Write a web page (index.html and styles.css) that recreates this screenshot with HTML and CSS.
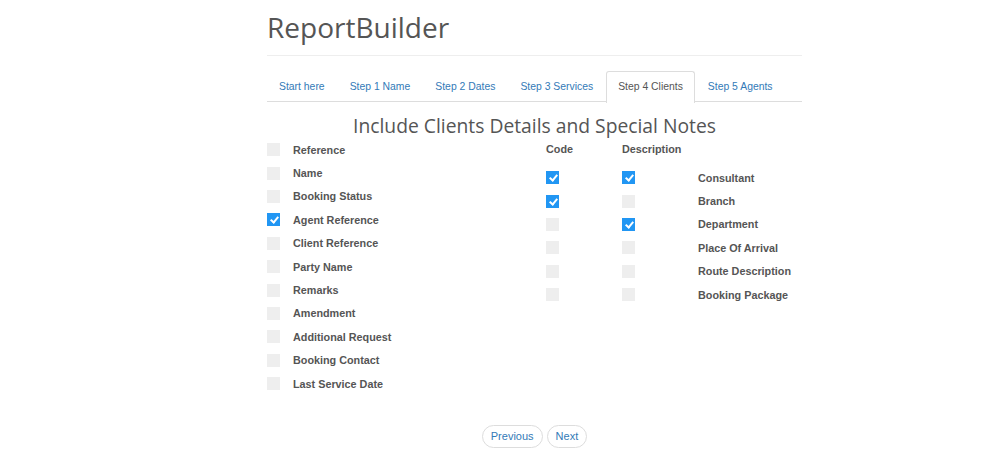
FILE: index.html
```html
<!DOCTYPE html>
<html>
<head>
<meta charset="utf-8">
<link rel="stylesheet" href="styles.css">
</head>
<body>
<div class="container">
  <div class="page-header"><h1>ReportBuilder</h1></div>
  <ul class="tabs">
    <li class="tab">Start here</li>
    <li class="tab">Step 1 Name</li>
    <li class="tab">Step 2 Dates</li>
    <li class="tab">Step 3 Services</li>
    <li class="tab active">Step 4 Clients</li>
    <li class="tab">Step 5 Agents</li>
  </ul>
  <h2 class="section-title">Include Clients Details and Special Notes</h2>
  <div class="fields">
    <div class="left-list">
      <div class="row"><span class="cb"></span><span class="lbl">Reference</span></div>
      <div class="row"><span class="cb"></span><span class="lbl">Name</span></div>
      <div class="row"><span class="cb"></span><span class="lbl">Booking Status</span></div>
      <div class="row"><span class="cb checked"></span><span class="lbl">Agent Reference</span></div>
      <div class="row"><span class="cb"></span><span class="lbl">Client Reference</span></div>
      <div class="row"><span class="cb"></span><span class="lbl">Party Name</span></div>
      <div class="row"><span class="cb"></span><span class="lbl">Remarks</span></div>
      <div class="row"><span class="cb"></span><span class="lbl">Amendment</span></div>
      <div class="row"><span class="cb"></span><span class="lbl">Additional Request</span></div>
      <div class="row"><span class="cb"></span><span class="lbl">Booking Contact</span></div>
      <div class="row"><span class="cb"></span><span class="lbl">Last Service Date</span></div>
    </div>
    <div class="right-table">
      <div class="trow head"><span class="lbl">Code</span><span class="lbl">Description</span><span></span></div>
      <div class="trow"><span class="cb checked"></span><span class="cb checked"></span><span class="lbl">Consultant</span></div>
      <div class="trow"><span class="cb checked"></span><span class="cb"></span><span class="lbl">Branch</span></div>
      <div class="trow"><span class="cb"></span><span class="cb checked"></span><span class="lbl">Department</span></div>
      <div class="trow"><span class="cb"></span><span class="cb"></span><span class="lbl">Place Of Arrival</span></div>
      <div class="trow"><span class="cb"></span><span class="cb"></span><span class="lbl">Route Description</span></div>
      <div class="trow"><span class="cb"></span><span class="cb"></span><span class="lbl">Booking Package</span></div>
    </div>
  </div>
  <div class="pager">
    <span class="pill">Previous</span>
    <span class="pill">Next</span>
  </div>
</div>
</body>
</html>
```

FILE: styles.css
```css
* { box-sizing: border-box; }
body {
  margin: 0;
  background: #fff;
  font-family: "Liberation Sans", Arial, sans-serif;
  color: #555;
}
.container {
  width: 535px;
  margin-left: 267px;
}
.page-header {
  height: 56px;
  border-bottom: 1px solid #eee;
  padding-top: 9px;
}
.page-header h1 {
  margin: 0;
  font-family: "Open Sans", sans-serif;
  font-weight: 400;
  font-size: 28px;
  line-height: 36px;
  color: #555;
}
.tabs {
  list-style: none;
  margin: 15px 0 0 0;
  padding: 0;
  display: flex;
  border-bottom: 1px solid #ddd;
  height: 31px;
}
.tab {
  height: 31px;
  padding: 0 11px;
  margin-right: 1px;
  border: 1px solid transparent;
  border-bottom: none;
  border-radius: 3px 3px 0 0;
  font-size: 10.4px;
  line-height: 29px;
  color: #337ab7;
  white-space: nowrap;
}
.tab.active {
  border-color: #ddd;
  background: #fff;
  color: #555;
  height: 32px;
}
.section-title {
  margin: 12px 0 0 0;
  text-align: center;
  font-family: "Open Sans", sans-serif;
  font-weight: 400;
  font-size: 19.3px;
  line-height: 24px;
  color: #555;
}
.fields {
  display: grid;
  grid-template-columns: 279px 1fr;
  margin-top: 0;
}
.row {
  display: flex;
  align-items: center;
  height: 23.4px;
}
.row .cb { margin-right: 13px; }
.cb {
  display: inline-block;
  width: 13px;
  height: 13px;
  background: #eee;
  flex: none;
  position: relative;
}
.cb.checked {
  background: #2196f3;
}
.cb.checked::after {
  content: "";
  position: absolute;
  left: 4.5px;
  top: 2px;
  width: 3px;
  height: 6px;
  border: solid #fff;
  border-width: 0 2px 2px 0;
  transform: rotate(40deg);
}
.lbl {
  font-size: 10.8px;
  font-weight: 700;
  color: #555;
  white-space: nowrap;
}
.trow {
  display: grid;
  grid-template-columns: 76px 76px 1fr;
  align-items: center;
  height: 23.4px;
}
.trow.head {
  height: 28px;
  align-items: start;
  padding-top: 5px;
}
.pager {
  display: flex;
  justify-content: center;
  gap: 4px;
  margin-top: 30px;
}
.pill {
  display: inline-block;
  height: 23px;
  padding: 0 8px;
  border: 1px solid #ddd;
  border-radius: 12px;
  font-size: 11px;
  line-height: 21px;
  color: #337ab7;
}
```
